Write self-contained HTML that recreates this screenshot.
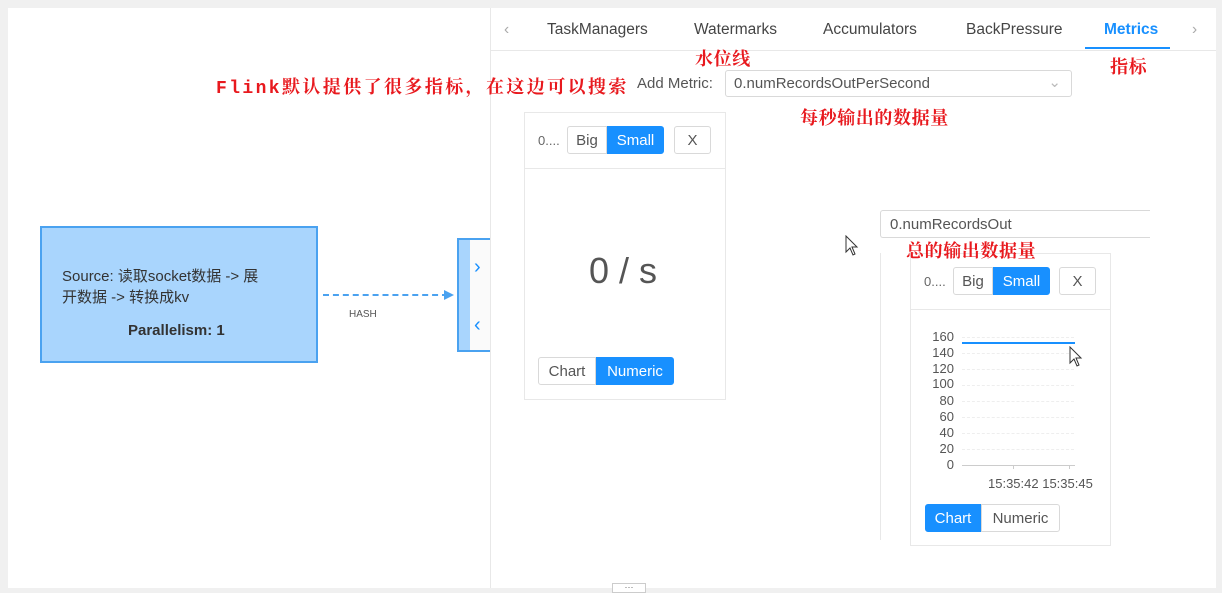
<!DOCTYPE html>
<html><head><meta charset="utf-8"><style>
*{margin:0;padding:0;box-sizing:border-box}
body{width:1222px;height:593px;background:#f0f0f0;position:relative;overflow:hidden;font-family:"Liberation Sans","Noto Sans CJK SC",sans-serif;color:#333}
.a{position:absolute}
.panel{left:8px;top:8px;width:1208px;height:580px;background:#fff}
.red{color:#e8191e;font-family:"Liberation Mono","Noto Serif CJK SC",serif;font-weight:bold;font-size:18px;letter-spacing:0.6px;position:absolute;white-space:nowrap;z-index:5;line-height:20px}
.tab{position:absolute;top:21px;font-size:15.5px;color:#444}
.btn{position:absolute;border:1px solid #d9d9d9;border-radius:3px;font-size:15px;color:#555;background:#fff;display:flex;align-items:center;justify-content:center}
.blue{background:#1890ff;color:#fff;border-color:#1890ff}
.card{position:absolute;border:1px solid #e8e8e8;background:#fff}
.yl{position:absolute;font-size:13px;color:#555;width:30px;text-align:right}
.gl{position:absolute;left:962px;width:112px;border-top:1px dashed #eee}
</style></head><body>
<div class="a panel"></div>
<div class="a" style="left:490px;top:8px;width:1px;height:580px;background:#e8e8e8"></div>
<div class="a" style="left:490px;top:50px;width:726px;height:1px;background:#e8e8e8"></div>
<div class="tab" style="left:504px;color:#aaa">&lsaquo;</div>
<div class="tab" style="left:547px">TaskManagers</div>
<div class="tab" style="left:694px">Watermarks</div>
<div class="tab" style="left:823px">Accumulators</div>
<div class="tab" style="left:966px">BackPressure</div>
<div class="tab" style="left:1104px;color:#1890ff;font-weight:bold">Metrics</div>
<div class="a" style="left:1085px;top:47px;width:85px;height:2px;background:#1890ff"></div>
<div class="tab" style="left:1192px;color:#aaa">&rsaquo;</div>
<div class="a" style="left:637px;top:75px;font-size:15px;color:#555">Add Metric:</div>
<div class="a" style="left:725px;top:70px;width:347px;height:27px;border:1px solid #d9d9d9;border-radius:3px;font-size:15px;color:#555;padding:4px 8px">0.numRecordsOutPerSecond<span style="position:absolute;right:10px;top:2px;color:#bbb">&#8964;</span></div>
<!-- left graph -->
<div class="a" style="left:40px;top:226px;width:278px;height:137px;background:#a9d5fd;border:2px solid #4aa2f0"></div>
<div class="a" style="left:62px;top:266px;font-size:15px;line-height:21px;color:#333">Source: 读取socket数据 -&gt; 展<br>开数据 -&gt; 转换成kv</div>
<div class="a" style="left:128px;top:322px;font-size:15px;font-weight:bold">Parallelism: 1</div>
<div class="a" style="left:323px;top:294px;width:125px;border-top:2px dashed #4aa2f0"></div>
<div class="a" style="left:444px;top:290px;width:0;height:0;border-left:10px solid #4aa2f0;border-top:5px solid transparent;border-bottom:5px solid transparent"></div>
<div class="a" style="left:349px;top:309px;font-size:10px;color:#555">HASH</div>
<div class="a" style="left:457px;top:238px;width:33px;height:114px;background:#a9d5fd;border:2px solid #4aa2f0;border-right:none"></div>
<div class="a" style="left:470px;top:240px;width:20px;height:110px;background:#fafafa"></div>
<div class="a" style="left:474px;top:256px;color:#1890ff;font-size:20px">&rsaquo;</div>
<div class="a" style="left:474px;top:314px;color:#1890ff;font-size:20px">&lsaquo;</div>
<!-- card 1 -->
<div class="card" style="left:524px;top:112px;width:202px;height:288px"></div>
<div class="a" style="left:524px;top:168px;width:202px;height:1px;background:#e8e8e8"></div>
<div class="a" style="left:538px;top:133px;font-size:13px;color:#666">0....</div>
<div class="btn" style="left:567px;top:126px;width:40px;height:28px;border-radius:3px 0 0 3px">Big</div>
<div class="btn blue" style="left:607px;top:126px;width:57px;height:28px;border-radius:0 3px 3px 0">Small</div>
<div class="btn" style="left:674px;top:126px;width:37px;height:28px">X</div>
<div class="a" style="left:589px;top:250px;font-size:36px;color:#555">0 / s</div>
<div class="btn" style="left:538px;top:357px;width:58px;height:28px;border-radius:3px 0 0 3px">Chart</div>
<div class="btn blue" style="left:596px;top:357px;width:78px;height:28px;border-radius:0 3px 3px 0">Numeric</div>
<!-- second -->
<div class="a" style="left:880px;top:210px;width:270px;height:28px;border:1px solid #d9d9d9;border-right:none;border-radius:3px 0 0 3px;font-size:15px;color:#555;padding:5px 9px">0.numRecordsOut</div>
<div class="a" style="left:880px;top:253px;width:1px;height:287px;background:#e8e8e8"></div>
<div class="card" style="left:910px;top:253px;width:201px;height:293px"></div>
<div class="a" style="left:910px;top:309px;width:201px;height:1px;background:#e8e8e8"></div>
<div class="a" style="left:924px;top:274px;font-size:13px;color:#666">0....</div>
<div class="btn" style="left:953px;top:267px;width:40px;height:28px;border-radius:3px 0 0 3px">Big</div>
<div class="btn blue" style="left:993px;top:267px;width:57px;height:28px;border-radius:0 3px 3px 0">Small</div>
<div class="btn" style="left:1059px;top:267px;width:37px;height:28px">X</div>
<div class="yl" style="left:924px;top:329px">160</div>
<div class="yl" style="left:924px;top:345px">140</div>
<div class="yl" style="left:924px;top:361px">120</div>
<div class="yl" style="left:924px;top:376px">100</div>
<div class="yl" style="left:924px;top:393px">80</div>
<div class="yl" style="left:924px;top:409px">60</div>
<div class="yl" style="left:924px;top:425px">40</div>
<div class="yl" style="left:924px;top:441px">20</div>
<div class="yl" style="left:924px;top:457px">0</div>
<div class="gl" style="top:337px"></div><div class="gl" style="top:353px"></div><div class="gl" style="top:369px"></div><div class="gl" style="top:385px"></div><div class="gl" style="top:401px"></div><div class="gl" style="top:417px"></div><div class="gl" style="top:433px"></div><div class="gl" style="top:449px"></div>
<div class="a" style="left:962px;top:342px;width:113px;height:2px;background:#1890ff"></div>
<div class="a" style="left:962px;top:465px;width:113px;height:1px;background:#ccc"></div>
<div class="a" style="left:1013px;top:465px;width:1px;height:4px;background:#ccc"></div>
<div class="a" style="left:1069px;top:465px;width:1px;height:4px;background:#ccc"></div>
<div class="a" style="left:988px;top:476px;font-size:13px;color:#555">15:35:42 15:35:45</div>
<div class="btn blue" style="left:925px;top:504px;width:56px;height:28px;border-radius:3px 0 0 3px">Chart</div>
<div class="btn" style="left:981px;top:504px;width:79px;height:28px;border-radius:0 3px 3px 0">Numeric</div>
<svg class="a" style="left:845px;top:235px" width="14" height="22"><path d="M1 1 L1 17 L5 13 L8 20 L10 19 L7 12 L12 12 Z" fill="#fff" stroke="#333"/></svg>
<svg class="a" style="left:1069px;top:346px" width="14" height="22"><path d="M1 1 L1 17 L5 13 L8 20 L10 19 L7 12 L12 12 Z" fill="#fff" stroke="#333"/></svg>
<div class="a" style="left:612px;top:583px;width:34px;height:10px;border:1px solid #ccc;background:#fff;font-size:9px;line-height:6px;text-align:center;color:#666">···</div>
<div class="red" style="left:695px;top:51px">水位线</div>
<div class="red" style="left:1110px;top:59px">指标</div>
<div class="red" style="left:216px;top:79px;letter-spacing:2.4px">Flink默认提供了很多指标，在这边可以搜索</div>
<div class="red" style="left:800px;top:110px">每秒输出的数据量</div>
<div class="red" style="left:906px;top:243px">总的输出数据量</div>
</body></html>
